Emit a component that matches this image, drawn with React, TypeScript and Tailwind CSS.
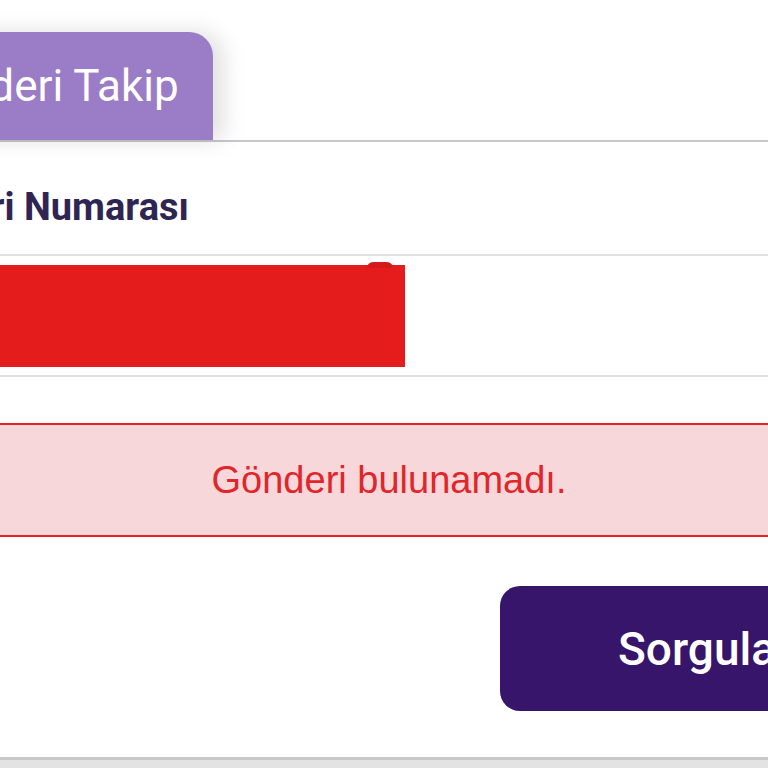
export default function App() {
  return (
    <div className="w-[768px] h-[768px] overflow-hidden bg-white font-['Roboto',sans-serif]">
      <div className="-ml-[120px] w-[1018px] pt-[32px]">
        {/* tab header */}
        <div className="flex">
          <div className="h-[108px] flex items-center pl-[30px] pr-[34px] bg-[#9a7dc6] rounded-tr-[24px] shadow-[10px_0_22px_rgba(0,0,0,0.13)] text-white text-[44px] leading-none">
            Gönderi Takip
          </div>
        </div>

        <div className="border-t-2 border-[#c6c6cb] bg-white">
          <div className="h-[112px] pl-[0px] pt-[46px] text-[38px] font-bold leading-none text-[#2f2553]">
            Gönderi Numarası
          </div>

          <div className="h-[123px] border-y-2 border-[#dfe0e3] flex items-center">
            <div className="relative w-[525px] h-[102px] bg-[#e41c1c]">
              <div className="absolute right-[12px] -top-[3px] w-[26px] h-[6px] rounded-t-full bg-[#d41a1a]" />
            </div>
          </div>

          <div className="mt-[46px] h-[114px] border-2 border-[#e0262a] bg-[#f8d7da] flex items-center justify-center font-['Liberation_Sans',Arial,sans-serif] text-[38px] text-[#e0262a]">
            Gönderi bulunamadı.
          </div>

          <div className="mt-[49px] flex justify-end pr-[4px]">
            <button className="w-[394px] h-[125px] rounded-[20px] bg-[#36156b] text-white text-[46px] font-medium leading-none">
              Sorgula
            </button>
          </div>

          <div className="mt-[46px] border-t-[3px] border-[#c8c8cc] bg-[#e3e3e3] h-[40px]" />
        </div>
      </div>
    </div>
  );
}
